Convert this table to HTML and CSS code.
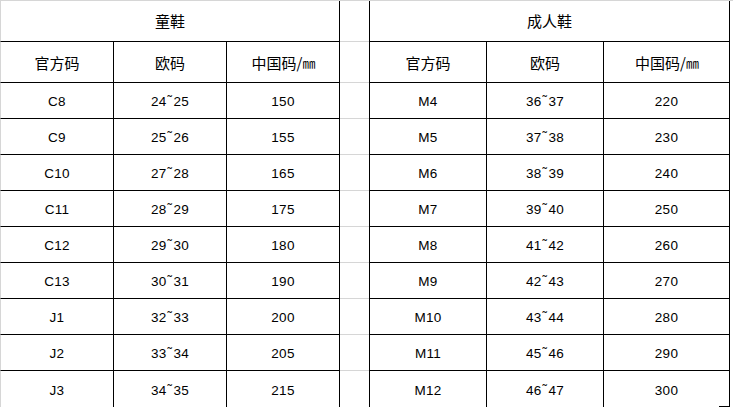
FILE: index.html
```html
<!DOCTYPE html>
<html lang="zh">
<head>
<meta charset="utf-8">
<title>鞋码对照表</title>
<link rel="stylesheet" href="styles.css">
</head>
<body>
<div class="sheet">
  <div class="tbl tbl-left">
    <div class="cell title span3 first">童鞋</div>
    <div class="cell head first">官方码</div>
    <div class="cell head">欧码</div>
    <div class="cell head">中国码/<span class="mm">㎜</span></div>

    <div class="cell num first">C8</div><div class="cell num">24<span class="t">˜</span>25</div><div class="cell num">150</div>
    <div class="cell num first">C9</div><div class="cell num">25<span class="t">˜</span>26</div><div class="cell num">155</div>
    <div class="cell num first">C10</div><div class="cell num">27<span class="t">˜</span>28</div><div class="cell num">165</div>
    <div class="cell num first">C11</div><div class="cell num">28<span class="t">˜</span>29</div><div class="cell num">175</div>
    <div class="cell num first">C12</div><div class="cell num">29<span class="t">˜</span>30</div><div class="cell num">180</div>
    <div class="cell num first">C13</div><div class="cell num">30<span class="t">˜</span>31</div><div class="cell num">190</div>
    <div class="cell num first">J1</div><div class="cell num">32<span class="t">˜</span>33</div><div class="cell num">200</div>
    <div class="cell num first">J2</div><div class="cell num">33<span class="t">˜</span>34</div><div class="cell num">205</div>
    <div class="cell num first last">J3</div><div class="cell num last">34<span class="t">˜</span>35</div><div class="cell num last">215</div>
  </div>

  <div class="gap">
    <div class="gcell g-head"></div>
    <div class="gcell g-head"></div>
    <div class="gcell"></div><div class="gcell"></div><div class="gcell"></div>
    <div class="gcell"></div><div class="gcell"></div><div class="gcell"></div>
    <div class="gcell"></div><div class="gcell"></div><div class="gcell last"></div>
  </div>

  <div class="tbl tbl-right">
    <div class="cell title span3">成人鞋</div>
    <div class="cell head">官方码</div>
    <div class="cell head">欧码</div>
    <div class="cell head">中国码/<span class="mm">㎜</span></div>

    <div class="cell num">M4</div><div class="cell num">36<span class="t">˜</span>37</div><div class="cell num">220</div>
    <div class="cell num">M5</div><div class="cell num">37<span class="t">˜</span>38</div><div class="cell num">230</div>
    <div class="cell num">M6</div><div class="cell num">38<span class="t">˜</span>39</div><div class="cell num">240</div>
    <div class="cell num">M7</div><div class="cell num">39<span class="t">˜</span>40</div><div class="cell num">250</div>
    <div class="cell num">M8</div><div class="cell num">41<span class="t">˜</span>42</div><div class="cell num">260</div>
    <div class="cell num">M9</div><div class="cell num">42<span class="t">˜</span>43</div><div class="cell num">270</div>
    <div class="cell num">M10</div><div class="cell num">43<span class="t">˜</span>44</div><div class="cell num">280</div>
    <div class="cell num">M11</div><div class="cell num">45<span class="t">˜</span>46</div><div class="cell num">290</div>
    <div class="cell num last">M12</div><div class="cell num last">46<span class="t">˜</span>47</div><div class="cell num last corner">300</div>
  </div>
</div>
</body>
</html>
```

FILE: styles.css
```css
html, body {
  margin: 0;
  padding: 0;
  background: #ffffff;
}

body {
  width: 733px;
  height: 407px;
  overflow: hidden;
  font-family: "Noto Sans CJK SC", "Liberation Sans", sans-serif;
  color: #000;
}

.sheet {
  display: flex;
  align-items: flex-start;
  border-top: 1px solid #d6d6d6;
  height: 406px;
}

.tbl {
  display: grid;
  grid-template-rows: 41px 41px repeat(9, 36px);
}

.tbl-left {
  grid-template-columns: 114px 113px 113px;
}

.tbl-right {
  grid-template-columns: 117px 117px 126px;
  border-left: 1px solid #000;
}

.cell {
  box-sizing: border-box;
  border-right: 1px solid #000;
  border-bottom: 1px solid #000;
  display: flex;
  align-items: center;
  justify-content: center;
  white-space: nowrap;
}

.cell.first {
  border-left: 1px solid #d6d6d6;
}

.cell.last {
  border-bottom: none;
}

.corner {
  position: relative;
}

.corner::after {
  content: "";
  position: absolute;
  right: 0;
  bottom: 0;
  width: 10px;
  height: 1px;
  background: #000;
}

.span3 {
  grid-column: 1 / span 3;
}

.title, .head {
  font-size: 15px;
  font-weight: 400;
}

.title {
  padding-bottom: 1px;
}

.mm {
  font-size: 13px;
  letter-spacing: -1px;
}

.num {
  font-family: "Liberation Sans", sans-serif;
  font-size: 13.5px;
  letter-spacing: 0.3px;
  padding-top: 2px;
}

.t {
  display: inline-block;
  width: 7px;
  text-align: center;
  position: relative;
  top: -1px;
}

.gap {
  width: 29px;
  display: grid;
  grid-template-rows: 41px 41px repeat(9, 36px);
}

.gcell {
  box-sizing: border-box;
  border-bottom: 1px solid #d6d6d6;
}

.gcell.last {
  border-bottom: none;
}
```
